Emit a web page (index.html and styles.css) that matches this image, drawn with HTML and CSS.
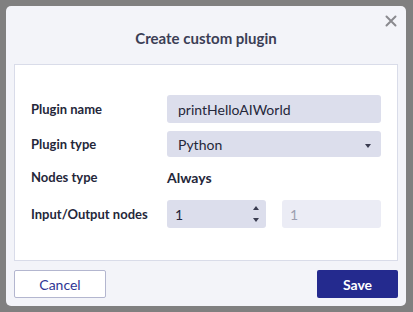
FILE: index.html
```html
<!DOCTYPE html>
<html>
<head>
<meta charset="utf-8">
<link rel="stylesheet" href="styles.css">
</head>
<body>
<div class="dialog">
  <div class="header">
    <span class="title">Create custom plugin</span>
    <span class="close">
      <svg width="12" height="12" viewBox="0 0 12 12"><path d="M1.5 1.5 L10.5 10.5 M10.5 1.5 L1.5 10.5" stroke="#8a8a8f" stroke-width="2" stroke-linecap="round"/></svg>
    </span>
  </div>
  <div class="panel">
    <div class="form">
      <div class="label r1">Plugin name</div>
      <div class="field r1">printHelloAIWorld</div>
      <div class="label r2">Plugin type</div>
      <div class="field select r2">Python<span class="caret"></span></div>
      <div class="label r3">Nodes type</div>
      <div class="value r3">Always</div>
      <div class="label r4">Input/Output nodes</div>
      <div class="nums r4">
        <div class="field num">1<span class="spin"><span class="up"></span><span class="down"></span></span></div>
        <div class="field num disabled">1</div>
      </div>
    </div>
  </div>
  <div class="footer">
    <button class="btn cancel">Cancel</button>
    <button class="btn save">Save</button>
  </div>
</div>
</body>
</html>
```
FILE: styles.css
```css
* { box-sizing: border-box; }
html, body { margin: 0; }
body {
  background: #808080;
  padding: 6px;
  font-family: "Lato", "Noto Sans", sans-serif;
  width: 413px;
  height: 312px;
  overflow: hidden;
}
.dialog {
  width: 400px;
  height: 300px;
  background: #f3f4f9;
  border-radius: 5px;
  display: flex;
  flex-direction: column;
}
.header {
  position: relative;
  height: 58px;
  display: flex;
  align-items: center;
  justify-content: center;
  padding-top: 6px;
}
.title {
  font-size: 15px;
  font-weight: 700;
  color: #3b3e55;
}
.close {
  position: absolute;
  right: 9px;
  top: 9px;
  width: 12px;
  height: 12px;
  display: flex;
}
.panel {
  margin: 0 8px;
  height: 197px;
  background: #ffffff;
  border: 1px solid #d9dce9;
  padding: 30px 16px 0 16px;
}
.form {
  display: grid;
  grid-template-columns: 136px 214px;
  grid-template-rows: 28px 26px 24px 28px;
  row-gap: 8px;
  align-items: center;
}
.r4 { margin-top: 6px; }
.label {
  font-size: 13px;
  font-weight: 700;
  color: #25273a;
}
.field {
  height: 100%;
  background: #dcdeec;
  border-radius: 3px;
  display: flex;
  align-items: center;
  padding-left: 11px;
  font-size: 14px;
  color: #25273a;
  position: relative;
}
.select .caret {
  position: absolute;
  right: 10px;
  top: 13px;
  width: 0;
  height: 0;
  border-left: 3.5px solid transparent;
  border-right: 3.5px solid transparent;
  border-top: 4px solid #3a3c50;
}
.value {
  font-size: 14px;
  font-weight: 700;
  color: #25273a;
}
.nums {
  display: flex;
  gap: 16px;
  height: 28px;
}
.num {
  width: 100px;
  padding-left: 8px;
}
.spin {
  position: absolute;
  right: 7px;
  top: 6px;
  display: flex;
  flex-direction: column;
  gap: 8px;
}
.spin .up {
  width: 0; height: 0;
  border-left: 3.5px solid transparent;
  border-right: 3.5px solid transparent;
  border-bottom: 4px solid #3a3c50;
}
.spin .down {
  width: 0; height: 0;
  border-left: 3.5px solid transparent;
  border-right: 3.5px solid transparent;
  border-top: 4px solid #3a3c50;
}
.disabled {
  background: #ebecf5;
  color: #9c9eb0;
}
.footer {
  display: flex;
  justify-content: space-between;
  padding: 9px 8px 0 8px;
}
.btn {
  height: 28px;
  font-family: inherit;
  font-size: 14px;
  border-radius: 2px;
  cursor: pointer;
}
.cancel {
  width: 92px;
  background: #ffffff;
  border: 1px solid #b3b6cf;
  color: #2f3594;
}
.save {
  width: 81px;
  background: #242a8e;
  border: none;
  color: #ffffff;
  font-weight: 700;
}
```
